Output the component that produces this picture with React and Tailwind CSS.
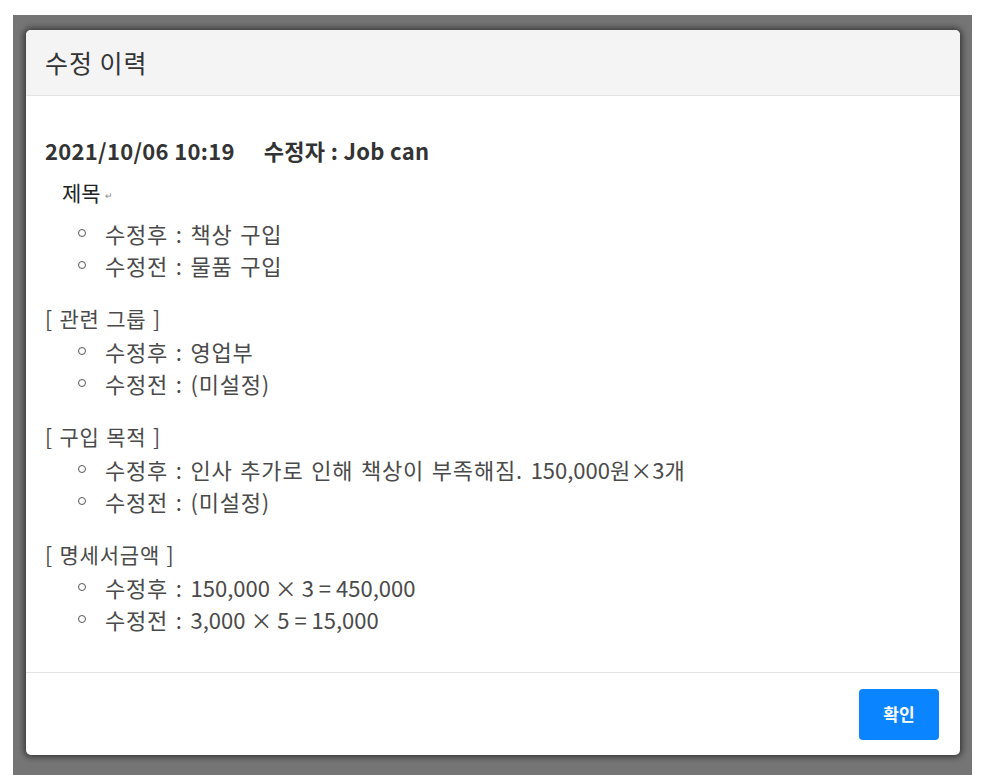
import React from "react";

const font = {
  fontFamily: '"Noto Sans CJK KR", "Noto Sans", sans-serif',
};

const Num = ({ children }) => (
  <span className="tracking-normal [word-spacing:normal]">{children}</span>
);

/* -------------------------------------------------------------------------- */
/*                                 CHANGE ROW                                 */
/* -------------------------------------------------------------------------- */

const ChangeItem = ({ label, value }) => (
  <li className="flex h-[32px] items-center text-[22px] tracking-[0.8px] text-[#4a4a4a] [word-spacing:2px]">
    <span className="ml-[33px] mr-[19px] h-[8px] w-[8px] shrink-0 rounded-full border-[1.5px] border-[#555]" />
    <span className="whitespace-nowrap">
      {label} : {value}
    </span>
  </li>
);

const Section = ({ title, after, before }) => (
  <div className="mt-[22px]">
    <div className="flex h-[32px] items-center text-[21px] tracking-[0.8px] text-[#4a4a4a] [word-spacing:1px]">
      [ {title} ]
    </div>
    <ul>
      <ChangeItem label="수정후" value={after} />
      <ChangeItem label="수정전" value={before} />
    </ul>
  </div>
);

/* -------------------------------------------------------------------------- */
/*                                    APP                                     */
/* -------------------------------------------------------------------------- */

export default function App() {
  return (
    <div
      className="h-[775px] w-[984px] overflow-hidden bg-white pl-[13px] pt-[15px]"
      style={font}
    >
      <div className="h-[760px] w-[959px] bg-[#757575] pl-[13px] pt-[15px]">
        <div className="flex h-[725px] w-[934px] flex-col overflow-hidden rounded-[5px] bg-white shadow-[0_0_6px_2px_rgba(0,0,0,0.55)]">
          {/* Header */}
          <div className="flex h-[66px] shrink-0 items-center border-b border-[#e3e3e3] bg-[#f4f4f4] px-[19px]">
            <h2 className="text-[25px] tracking-[1px] text-[#333]">수정 이력</h2>
          </div>

          {/* Body */}
          <div className="flex-1 px-[19px] pt-[38px]">
            <div className="flex h-[32px] items-center text-[22px] font-bold tracking-[0.3px] text-[#333]">
              <span>2021/10/06 10:19</span>
              <span className="ml-[29px]">수정자 : Job can</span>
            </div>

            <div className="mt-[11px] flex h-[32px] items-center pl-[17px] text-[21px] text-[#222]">
              제목
              <span className="ml-[4px] mt-[6px] text-[9px] text-[#888]">↵</span>
            </div>
            <ul className="mt-[8px]">
              <ChangeItem label="수정후" value="책상 구입" />
              <ChangeItem label="수정전" value="물품 구입" />
            </ul>

            <Section title="관련 그룹" after="영업부" before="(미설정)" />
            <Section
              title="구입 목적"
              after={
                <>
                  인사 추가로 인해 책상이 부족해짐.{" "}
                  <Num>150,000원×3개</Num>
                </>
              }
              before="(미설정)"
            />
            <Section
              title="명세서금액"
              after={<Num>150,000 × 3 = 450,000</Num>}
              before={<Num>3,000 × 5 = 15,000</Num>}
            />
          </div>

          {/* Footer */}
          <div className="flex h-[83px] shrink-0 items-center justify-end border-t border-[#e3e3e3] px-[21px]">
            <button
              type="button"
              className="h-[51px] w-[80px] rounded-[4px] bg-[#0a84ff] text-[17px] font-bold text-white"
            >
              확인
            </button>
          </div>
        </div>
      </div>
    </div>
  );
}
